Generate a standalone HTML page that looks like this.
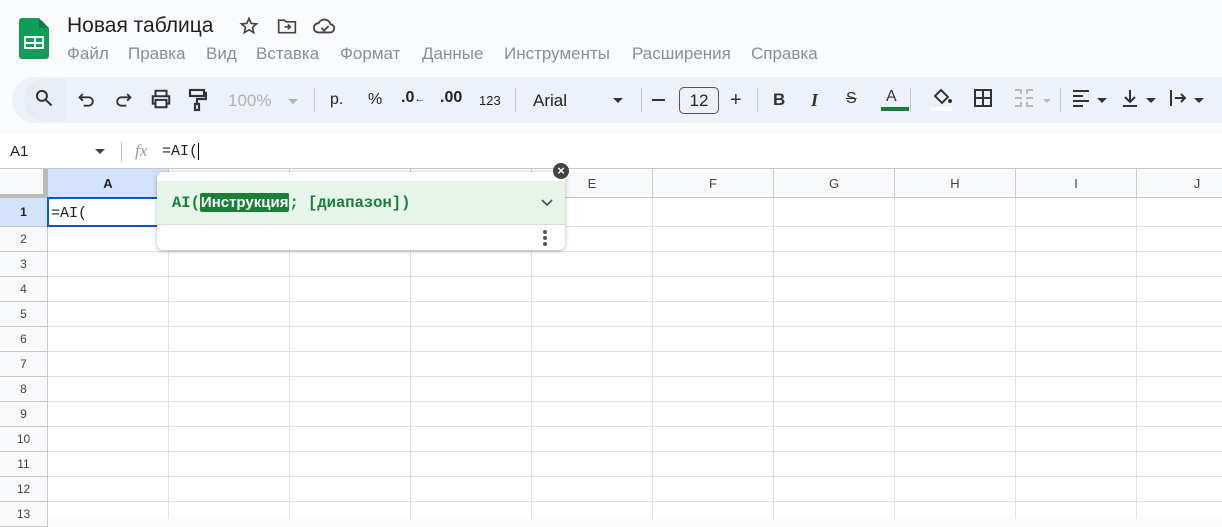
<!DOCTYPE html>
<html><head><meta charset="utf-8"><style>
*{box-sizing:border-box;margin:0;padding:0}
body{width:1222px;height:518px;overflow:hidden;background:#f9fbfd;font-family:"Liberation Sans",Arial,sans-serif;position:relative;color:#444746}
.a{position:absolute}
.menu span{position:absolute;top:0}
.tb{left:12px;top:77px;width:1230px;height:46px;background:#edf2fa;border-radius:23px}
.ic{position:absolute;top:88px}
svg{display:block}
.grid{left:0;top:168px;width:1222px;height:350px;background:#fff}
.ch{position:absolute;top:0;height:29px;border-right:1px solid #c7c7c7;border-bottom:1px solid #c7c7c7;background:#f8f9fa;font-size:13px;text-align:center;line-height:29px;color:#444}
.rh{position:absolute;left:0;width:48px;border-right:1px solid #c7c7c7;border-bottom:1px solid #c7c7c7;background:#f8f9fa;font-size:12px;text-align:center;color:#444}
.vl{position:absolute;top:29px;bottom:0;width:1px;background:#e1e1e1}
.hl{position:absolute;left:48px;right:0;height:1px;background:#e1e1e1}
.mono{font-family:"Liberation Mono",monospace}
</style></head><body>
<div class="a" style="left:19px;top:18px;width:30px;height:41px;background:#0f9d58;border-radius:3px"></div>
<div class="a" style="left:39px;top:18px;width:10px;height:10px;background:linear-gradient(225deg,#f9fbfd 50%,#0b7a43 50%)"></div>
<div class="a" style="left:24px;top:36px;width:20px;height:13px;border:2px solid #fff;background:linear-gradient(#fff,#fff) 8px 0/2px 100% no-repeat,linear-gradient(#fff,#fff) 0 4px/100% 2px no-repeat"></div>
<div class="a" style="left:67px;top:14px;font-size:21px;color:#1f1f1f">Новая таблица</div>
<div class="a" style="left:239px;top:16px"><svg width="20" height="20" viewBox="0 0 24 24" fill="none" stroke="#444" stroke-width="2"><path d="M12 3l2.6 6 6.4.5-4.9 4.2 1.5 6.3L12 16.6 6.4 20l1.5-6.3L3 9.5l6.4-.5z"/></svg></div>
<div class="a" style="left:277px;top:17px"><svg width="20" height="18" viewBox="0 0 24 20" fill="none" stroke="#444" stroke-width="2"><path d="M2 3h7l2 2h11v13H2z"/><path d="M9 11h7m-3-3l3 3-3 3"/></svg></div>
<div class="a" style="left:313px;top:17px"><svg width="24" height="18" viewBox="0 0 26 18" fill="none" stroke="#444" stroke-width="2"><path d="M7 16H6a5 5 0 010-10 7 7 0 0113 1 4.5 4.5 0 01-1 9z"/><path d="M9 11l3 3 5-5"/></svg></div>
<div class="a menu" style="left:0;top:44px;font-size:17px;color:#8a8e92;white-space:nowrap"><span style="left:67px">Файл</span><span style="left:128px">Правка</span><span style="left:206px">Вид</span><span style="left:256px">Вставка</span><span style="left:340px">Формат</span><span style="left:422px">Данные</span><span style="left:504px">Инструменты</span><span style="left:632px">Расширения</span><span style="left:751px">Справка</span></div>
<div class="a tb"></div>
<div class="a" style="left:24px;top:79px;width:43px;height:42px;background:#e8edf5;border-radius:20px 0 0 20px"></div>
<div class="ic" style="left:34px"><svg width="20" height="20" viewBox="0 0 24 24" fill="none" stroke="#333" stroke-width="2.4"><circle cx="9.5" cy="9.5" r="6"/><path d="M14 14l7 7"/></svg></div>
<div class="ic" style="left:77px"><svg width="20" height="22" viewBox="0 0 24 24" fill="none" stroke="#333" stroke-width="2.2"><path d="M7 6L3 10l4 4"/><path d="M3 10h11a5 5 0 010 10H8"/></svg></div>
<div class="ic" style="left:113px"><svg width="20" height="22" viewBox="0 0 24 24" fill="none" stroke="#333" stroke-width="2.2"><path d="M17 6l4 4-4 4"/><path d="M21 10H10a5 5 0 000 10h6"/></svg></div>
<div class="ic" style="left:150px"><svg width="22" height="22" viewBox="0 0 24 24" fill="none" stroke="#333" stroke-width="2.2"><path d="M6 9V3h12v6M6 17H3V9h18v8h-3"/><rect x="6" y="13" width="12" height="8"/></svg></div>
<div class="ic" style="left:187px"><svg width="20" height="24" viewBox="0 0 20 24" fill="none" stroke="#333" stroke-width="2.2"><rect x="3" y="2" width="14" height="6"/><path d="M17 5h2v6H10v5"/><rect x="8" y="16" width="4" height="6"/></svg></div>
<div class="a" style="left:228px;top:91px;font-size:17px;color:#b0b3b7">100%</div>
<div class="a" style="left:288px;top:99px;border:5px solid transparent;border-top-color:#b0b3b7"></div>
<div class="a" style="left:314px;top:88px;width:1px;height:24px;background:#c7c7c7"></div>
<div class="a" style="left:330px;top:91px;font-size:16px;color:#222">р.</div>
<div class="a" style="left:368px;top:91px;font-size:16px;color:#222">%</div>
<div class="a" style="left:401px;top:89px;font-size:16px;color:#222;font-weight:bold">.0<span style="font-size:11px">←</span></div>
<div class="a" style="left:440px;top:89px;font-size:16px;color:#222;font-weight:bold">.00</div>
<div class="a" style="left:479px;top:93px;font-size:13px;color:#222">123</div>
<div class="a" style="left:515px;top:88px;width:1px;height:24px;background:#c7c7c7"></div>
<div class="a" style="left:533px;top:91px;font-size:17px;color:#222">Arial</div>
<div class="a" style="left:613px;top:98px;border:5px solid transparent;border-top-color:#333"></div>
<div class="a" style="left:641px;top:88px;width:1px;height:24px;background:#c7c7c7"></div>
<div class="a" style="left:652px;top:99px;width:13px;height:2px;background:#333"></div>
<div class="a" style="left:679px;top:87px;width:40px;height:27px;border:1px solid #555;border-radius:5px;font-size:17px;text-align:center;line-height:25px;color:#222">12</div>
<div class="a" style="left:730px;top:93px;font-size:20px;color:#333;line-height:14px">+</div>
<div class="a" style="left:757px;top:88px;width:1px;height:24px;background:#c7c7c7"></div>
<div class="a" style="left:773px;top:90px;font-size:17px;font-weight:bold;color:#333">B</div>
<div class="a" style="left:811px;top:90px;font-size:18px;font-style:italic;font-family:'Liberation Serif',serif;font-weight:bold;color:#333">I</div>
<div class="a" style="left:846px;top:90px;font-size:16px;color:#333;text-decoration:line-through">S</div>
<div class="a" style="left:886px;top:88px;font-size:16px;color:#333">A</div>
<div class="a" style="left:881px;top:107px;width:28px;height:4px;background:#188038"></div>
<div class="a" style="left:910px;top:88px;width:1px;height:24px;background:#c7c7c7"></div>
<div class="ic" style="left:932px"><svg width="22" height="18" viewBox="0 0 22 18" fill="#333"><path d="M3 8l6-6 7 7-6 6z" fill="none" stroke="#333" stroke-width="2"/><circle cx="18" cy="13" r="2"/></svg></div>
<div class="a" style="left:931px;top:107px;width:21px;height:4px;background:#fff"></div>
<div class="ic" style="left:973px"><svg width="20" height="20" viewBox="0 0 20 20" fill="none" stroke="#333" stroke-width="2"><rect x="2" y="2" width="16" height="16"/><path d="M10 2v16M2 10h16"/></svg></div>
<div class="ic" style="left:1013px"><svg width="22" height="20" viewBox="0 0 22 20" fill="none" stroke="#bbb" stroke-width="2"><path d="M2 2h6v4M2 18h6v-4M20 2h-6v4M20 18h-6v-4M2 10h7M20 10h-7"/></svg></div>
<div class="a" style="left:1043px;top:99px;border:4px solid transparent;border-top-color:#bbb"></div>
<div class="a" style="left:1060px;top:88px;width:1px;height:24px;background:#c7c7c7"></div>
<div class="ic" style="left:1071px"><svg width="20" height="20" viewBox="0 0 20 20" stroke="#333" stroke-width="2"><path d="M2 3h16M2 8h10M2 13h16M2 18h10"/></svg></div>
<div class="a" style="left:1097px;top:98px;border:5px solid transparent;border-top-color:#333"></div>
<div class="ic" style="left:1121px"><svg width="18" height="20" viewBox="0 0 18 20" fill="none" stroke="#333" stroke-width="2"><path d="M9 2v12M4 9l5 5 5-5M2 18h14"/></svg></div>
<div class="a" style="left:1146px;top:98px;border:5px solid transparent;border-top-color:#333"></div>
<div class="ic" style="left:1169px"><svg width="20" height="20" viewBox="0 0 20 20" fill="none" stroke="#333" stroke-width="2"><path d="M2 2v16M6 10h10M12 6l4 4-4 4"/></svg></div>
<div class="a" style="left:1194px;top:98px;border:5px solid transparent;border-top-color:#333"></div>
<div class="a" style="left:0;top:134px;width:1222px;height:35px;background:#fff;border-bottom:1px solid #c7c7c7"></div>
<div class="a" style="left:10px;top:143px;font-size:15px;color:#222">A1</div>
<div class="a" style="left:95px;top:149px;border:5px solid transparent;border-top-color:#444"></div>
<div class="a" style="left:121px;top:142px;width:1px;height:20px;background:#c7c7c7"></div>
<div class="a" style="left:135px;top:141px;font-size:17px;font-style:italic;font-family:'Liberation Serif',serif;color:#999">fx</div>
<div class="a mono" style="left:162px;top:143px;font-size:15px;color:#222">=AI(<span style="border-left:1px solid #000">&nbsp;</span></div>
<div class="a grid" style="top:169px">
<div class="ch" style="left:0;width:48px;border-right:5px solid #bbb;border-bottom:4px solid #bbb"></div>
<div class="ch" style="left:48px;width:121px;background:#d3e3fd;font-weight:bold;color:#222">A</div>
<div class="ch" style="left:169px;width:121px">B</div>
<div class="ch" style="left:290px;width:121px">C</div>
<div class="ch" style="left:411px;width:121px">D</div>
<div class="ch" style="left:532px;width:121px">E</div>
<div class="ch" style="left:653px;width:121px">F</div>
<div class="ch" style="left:774px;width:121px">G</div>
<div class="ch" style="left:895px;width:121px">H</div>
<div class="ch" style="left:1016px;width:121px">I</div>
<div class="ch" style="left:1137px;width:121px">J</div>
<div class="vl" style="left:168px"></div><div class="vl" style="left:289px"></div><div class="vl" style="left:410px"></div><div class="vl" style="left:531px"></div><div class="vl" style="left:652px"></div><div class="vl" style="left:773px"></div><div class="vl" style="left:894px"></div><div class="vl" style="left:1015px"></div><div class="vl" style="left:1136px"></div>
<div class="rh" style="top:29px;height:29px;line-height:28px;background:#d3e3fd;font-weight:bold;color:#222">1</div>
<div class="hl" style="top:57px"></div>
<div class="rh" style="top:58px;height:25px;line-height:24px">2</div><div class="hl" style="top:82px"></div>
<div class="rh" style="top:83px;height:25px;line-height:24px">3</div><div class="hl" style="top:107px"></div>
<div class="rh" style="top:108px;height:25px;line-height:24px">4</div><div class="hl" style="top:132px"></div>
<div class="rh" style="top:133px;height:25px;line-height:24px">5</div><div class="hl" style="top:157px"></div>
<div class="rh" style="top:158px;height:25px;line-height:24px">6</div><div class="hl" style="top:182px"></div>
<div class="rh" style="top:183px;height:25px;line-height:24px">7</div><div class="hl" style="top:207px"></div>
<div class="rh" style="top:208px;height:25px;line-height:24px">8</div><div class="hl" style="top:232px"></div>
<div class="rh" style="top:233px;height:25px;line-height:24px">9</div><div class="hl" style="top:257px"></div>
<div class="rh" style="top:258px;height:25px;line-height:24px">10</div><div class="hl" style="top:282px"></div>
<div class="rh" style="top:283px;height:25px;line-height:24px">11</div><div class="hl" style="top:307px"></div>
<div class="rh" style="top:308px;height:25px;line-height:24px">12</div><div class="hl" style="top:332px"></div>
<div class="rh" style="top:333px;height:25px;line-height:24px">13</div>
<div class="a" style="left:47px;top:28px;width:124px;height:30px;border:2px solid #0b57d0;background:#fff"></div>
<div class="a mono" style="left:51px;top:36px;font-size:15px;color:#222">=AI(</div>
</div>
<div class="a" style="left:157px;top:172px;width:408px;height:78px;background:#fff;border-radius:6px;box-shadow:0 1px 4px rgba(0,0,0,.3)"></div>
<div class="a" style="left:157px;top:181px;width:408px;height:44px;background:#e6f4ea;border-bottom:1px solid #d0e0d4"></div>
<div class="a mono" style="left:172px;top:194px;font-size:15.5px;color:#188038;font-weight:bold">AI(<span style="background:#188038;color:#fff;font-family:'Liberation Sans',sans-serif;font-size:15px;padding:1px 1px;border-radius:2px">Инструкция</span>; [диапазон])</div>
<div class="a" style="left:541px;top:197px"><svg width="12" height="10" viewBox="0 0 12 10" fill="none" stroke="#555" stroke-width="1.8"><path d="M1 3l5 5 5-5"/></svg></div>
<div class="a" style="left:543px;top:230px;width:4px;height:4px;border-radius:2px;background:#555;box-shadow:0 6px 0 #555,0 12px 0 #555"></div>
<div class="a" style="left:553px;top:163px;width:16px;height:16px;border-radius:8px;background:#444;color:#fff;font-size:13px;font-weight:bold;text-align:center;line-height:16px">×</div>
</body></html>
